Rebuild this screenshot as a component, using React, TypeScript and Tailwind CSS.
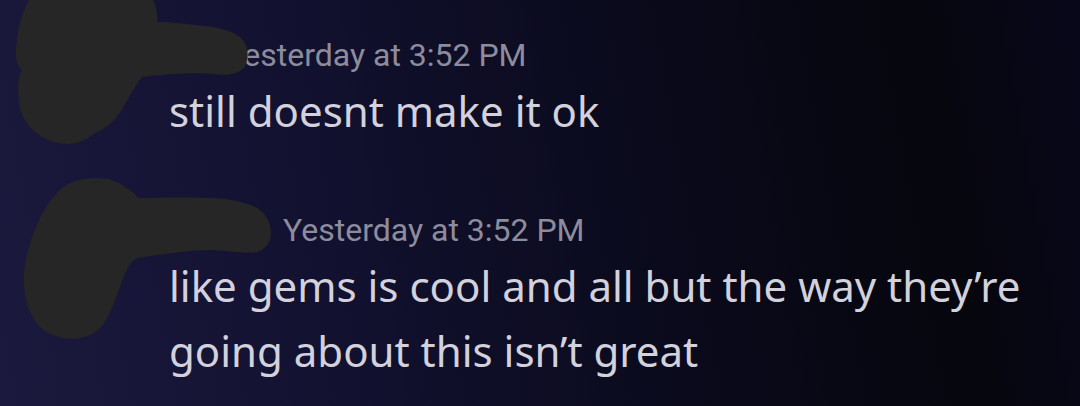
import React from "react";

function Blobs() {
  return (
    <svg
      className="absolute inset-0 pointer-events-none"
      width="1080"
      height="406"
      viewBox="0 0 1080 406"
    >
      <path
        fill="#262626"
        d="M 30 -2 C 22 12 17 30 16 50 C 15 60 18 66 22 70 C 18 76 17 92 20 108 C 24 124 40 143 67 144 C 80 144 88 138 95 133 C 108 128 118 118 126 102 C 133 90 138 82 142 77 C 165 74 195 72 215 74 C 228 76 238 74 244 68 C 249 60 249 48 243 40 C 236 32 222 28 205 26 C 185 24 170 22 157 22 C 158 14 156 4 152 -2 Z"
      />
      <path
        fill="#262626"
        d="M 96 178 C 80 178 66 183 58 192 C 46 204 38 220 32 238 C 26 254 23 270 24 284 C 25 300 29 316 40 327 C 52 337 66 340 80 338 C 92 336 100 330 106 320 C 113 308 118 292 124 276 C 128 266 132 260 138 258 C 160 254 185 251 207 250 C 225 250 245 254 257 252 C 266 249 271 242 271 233 C 271 222 265 212 255 207 C 240 200 222 198 207 198 C 180 197 158 198 138 198 C 134 193 131 190 126 188 C 118 181 108 178 96 178 Z"
      />
    </svg>
  );
}

export default function App() {
  return (
    <div className="relative w-[1080px] h-[406px] overflow-hidden bg-[linear-gradient(80deg,#1b1a3e_0%,#121130_30%,#0a0a1c_60%,#06060e_85%,#08071a_100%)]">
      <div className="flex flex-col pl-[169px] pt-[37px]">
        <div className="flex flex-col">
          <div className="flex items-center gap-2 h-[36px]">
            <span className="w-[48px] shrink-0" />
            <span className="font-['Roboto',sans-serif] text-[32px] leading-[36px] text-[#8d8c9c] whitespace-nowrap">
              Yesterday at 3:52 PM
            </span>
          </div>
          <p className="mt-[5px] font-['Noto_Sans',sans-serif] text-[42px] leading-[65px] text-[#d2d1dc] whitespace-nowrap">
            still doesnt make it ok
          </p>
        </div>
        <div className="flex flex-col mt-[69px]">
          <div className="flex items-center gap-2 h-[36px]">
            <span className="w-[106px] shrink-0" />
            <span className="font-['Roboto',sans-serif] text-[32px] leading-[36px] text-[#8d8c9c] whitespace-nowrap">
              Yesterday at 3:52 PM
            </span>
          </div>
          <p className="mt-[5px] font-['Noto_Sans',sans-serif] text-[42px] leading-[65px] text-[#d2d1dc] w-[880px]">
            like gems is cool and all but the way they’re
            <br />
            going about this isn’t great
          </p>
        </div>
      </div>
      <Blobs />
    </div>
  );
}
